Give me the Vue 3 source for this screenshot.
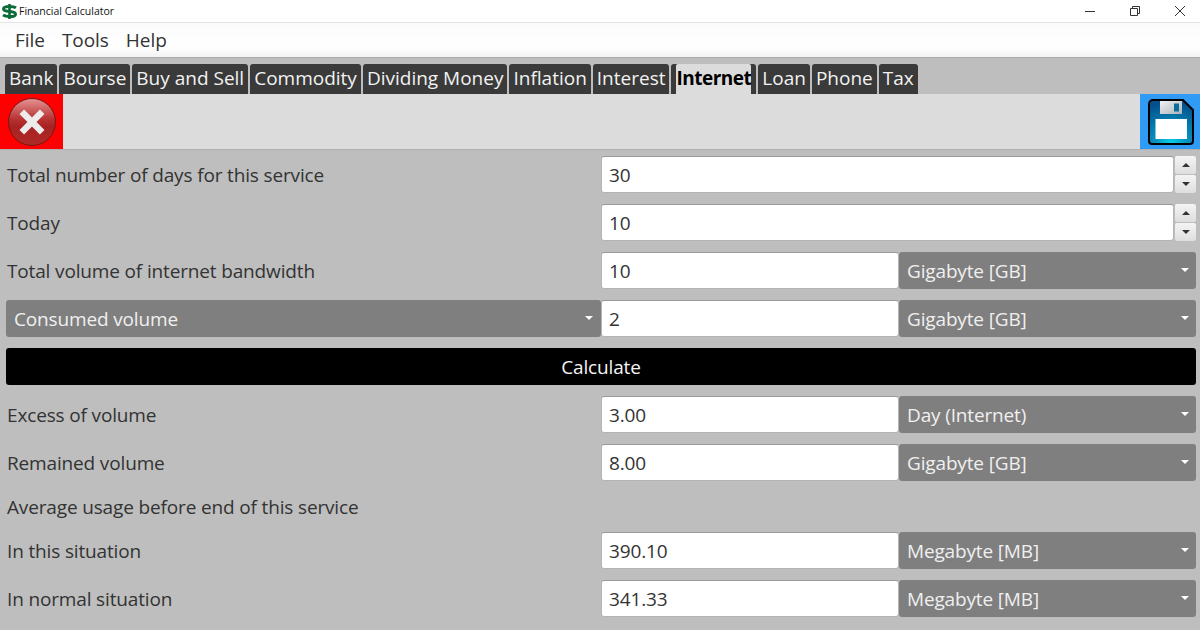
<script setup>
const menus = ['File', 'Tools', 'Help']
const tabs = ['Bank', 'Bourse', 'Buy and Sell', 'Commodity', 'Dividing Money', 'Inflation', 'Interest', 'Internet', 'Loan', 'Phone', 'Tax']
</script>

<template>
  <div class="window">
    <header class="titlebar">
      <svg class="app-icon" width="15" height="15" viewBox="0 0 15 15">
        <path d="M7.500 0v15" stroke="#0b6b3a" stroke-width="2.600" fill="none"/>
        <path d="M14 3.800C12.500 2.800 10 2.400 7.500 2.400S1.500 3 1.500 5s3 2.300 6 2.500 6 .8 6 2.700-3 2.400-6 2.400-5-.5-6.500-1.500" stroke="#0b6b3a" stroke-width="3" fill="none"/>
      </svg>
      <span class="app-title">Financial Calculator</span>
      <div class="win-controls">
        <svg width="12" height="12" viewBox="0 0 12 12"><path d="M1 6.500h10" stroke="#333" fill="none"/></svg>
        <svg width="12" height="12" viewBox="0 0 12 12"><path d="M1.500 3.500h7v7h-7zM3.500 3.500v-2h7v7h-2" stroke="#333" fill="none"/></svg>
        <svg width="12" height="12" viewBox="0 0 12 12"><path d="M1 1l10 10M11 1L1 11" stroke="#333" fill="none"/></svg>
      </div>
    </header>

    <nav class="menubar">
      <span v-for="m in menus" :key="m" class="menu">{{ m }}</span>
    </nav>

    <div class="tabstrip">
      <div v-for="t in tabs" :key="t" class="tab" :class="{ active: t === 'Internet' }"><span>{{ t }}</span></div>
    </div>

    <div class="toolbar">
      <button class="tool close-btn" aria-label="Close">
        <svg width="50" height="50" viewBox="0 0 50 50">
          <defs>
            <linearGradient id="redg" x1="0" y1="0" x2="0" y2="1">
              <stop offset="0" stop-color="#e79393"/>
              <stop offset="0.42" stop-color="#b93636"/>
              <stop offset="0.6" stop-color="#a82222"/>
              <stop offset="1" stop-color="#b02a2a"/>
            </linearGradient>
          </defs>
          <circle cx="25" cy="25" r="23.500" fill="url(#redg)" stroke="#741616" stroke-width="1"/>
          <path d="M14.800 14.800l20.400 20.400M35.200 14.800L14.800 35.200" stroke="#ececec" stroke-width="6.500" fill="none"/>
        </svg>
      </button>
      <button class="tool save-btn" aria-label="Save">
        <svg width="46" height="46" viewBox="0 0 46 46">
          <defs>
            <radialGradient id="blueg" cx="0.5" cy="1" r="0.95">
              <stop offset="0" stop-color="#05d4ec"/>
              <stop offset="0.35" stop-color="#0596c4"/>
              <stop offset="1" stop-color="#04508c"/>
            </radialGradient>
            <linearGradient id="shut" x1="0" y1="0" x2="1" y2="1">
              <stop offset="0" stop-color="#f2f2f2"/>
              <stop offset="1" stop-color="#a9b3ba"/>
            </linearGradient>
          </defs>
          <path d="M5 1h30l10 10v31a3 3 0 0 1-3 3H4a3 3 0 0 1-3-3V5a4 4 0 0 1 4-4z" fill="url(#blueg)" stroke="#000" stroke-width="2"/>
          <rect x="12" y="2" width="22" height="13" fill="url(#shut)"/>
          <rect x="26" y="4.500" width="5" height="8" fill="#066f9e"/>
          <rect x="7.500" y="20" width="31.500" height="20" fill="#fff"/>
        </svg>
      </button>
    </div>

    <main class="form">
      <label class="lbl">Total number of days for this service</label>
      <div class="spin wide">
        <div class="field">30</div>
        <div class="spin-btns"><span class="sb"><i class="up"></i></span><span class="sb"><i class="down"></i></span></div>
      </div>

      <label class="lbl">Today</label>
      <div class="spin wide">
        <div class="field">10</div>
        <div class="spin-btns"><span class="sb"><i class="up"></i></span><span class="sb"><i class="down"></i></span></div>
      </div>

      <label class="lbl">Total volume of internet bandwidth</label>
      <div class="field">10</div>
      <div class="select">Gigabyte [GB]<i class="caret"></i></div>

      <div class="select">Consumed volume<i class="caret small"></i></div>
      <div class="field">2</div>
      <div class="select">Gigabyte [GB]<i class="caret"></i></div>

      <button class="calc">Calculate</button>

      <label class="lbl">Excess of volume</label>
      <div class="field">3.00</div>
      <div class="select">Day (Internet)<i class="caret"></i></div>

      <label class="lbl">Remained volume</label>
      <div class="field">8.00</div>
      <div class="select">Gigabyte [GB]<i class="caret"></i></div>

      <label class="lbl heading">Average usage before end of this service</label>

      <label class="lbl">In this situation</label>
      <div class="field">390.10</div>
      <div class="select">Megabyte [MB]<i class="caret"></i></div>

      <label class="lbl">In normal situation</label>
      <div class="field">341.33</div>
      <div class="select">Megabyte [MB]<i class="caret"></i></div>
    </main>
  </div>
</template>

<style>
html, body { margin: 0; background: #bebebe; }
</style>

<style scoped>
.window {
  width: 1200px;
  height: 630px;
  overflow: hidden;
  background: #bebebe;
  font-family: "Open Sans", "Noto Sans", sans-serif;
  color: #333;
  display: flex;
  flex-direction: column;
}
.titlebar {
  height: 22px;
  flex: none;
  background: #fff;
  display: flex;
  align-items: center;
  padding-left: 2px;
  border-bottom: 1px solid #e4e4e4;
}
.app-icon { margin-right: 2px; }
.app-title { font-size: 10.500px; color: #111; }
.win-controls {
  margin-left: auto;
  display: flex;
  gap: 33px;
  padding-right: 14px;
}
.menubar {
  height: 34px;
  flex: none;
  display: flex;
  align-items: center;
  gap: 17px;
  padding: 0 0 0 15px;
  background: linear-gradient(#fbfbfb, #ffffff 70%, #f3f3f3);
  border-bottom: 1px solid #ababab;
  font-size: 19px;
  letter-spacing: -0.05px;
  color: #333;
}
.tabstrip {
  height: 36px;
  flex: none;
  display: flex;
  align-items: flex-end;
  gap: 2px;
  padding-left: 5px;
  background: #bebebe;
}
.tab {
  height: 30px;
  padding: 0 4px;
  background: #3a3a3a;
  border-radius: 3px 3px 0 0;
  display: flex;
  font-size: 19px;
  color: #f2f2f2;
}
.tab span { line-height: 29px; }
.tab.active { padding: 0 5px; color: #000; font-weight: 700; letter-spacing: -0.5px; }
.tab.active span { background: #dcdcdc; border-radius: 2px 2px 0 0; }
.toolbar {
  height: 56px;
  flex: none;
  display: flex;
  justify-content: space-between;
  background: #dcdcdc;
  border-bottom: 1px solid #b0b0b0;
  box-sizing: border-box;
}
.tool {
  border: 0;
  padding: 0;
  display: flex;
  align-items: center;
  justify-content: center;
}
.close-btn { width: 63px; background: #ff0000; }
.save-btn { width: 60px; background: #2f9bf5; padding-left: 2px; }
.form {
  display: grid;
  grid-template-columns: 595px 298px 297px;
  grid-template-rows: repeat(7, 37px) 29px repeat(2, 37px);
  row-gap: 11px;
  padding: 6px 4px 0 6px;
  font-size: 19px;
  letter-spacing: -0.15px;
}
.lbl {
  display: flex;
  align-items: center;
  padding-left: 1px;
  color: #333;
}
.heading {
  grid-column: 1 / -1;
}
.field {
  background: #fff;
  border: 1px solid #b4b4b4;
  border-top-color: #999;
  border-radius: 3px;
  box-sizing: border-box;
  padding-left: 7px;
  display: flex;
  align-items: center;
  color: #333;
}
.wide { grid-column: 2 / 4; }
.spin { display: flex; gap: 1px; }
.spin .field { flex: 1; }
.spin-btns {
  width: 21px;
  display: flex;
  flex-direction: column;
  gap: 1px;
}
.sb {
  flex: 1;
  background: linear-gradient(#f4f4f4, #dedede);
  border-radius: 2px;
  display: flex;
  align-items: center;
  justify-content: center;
}
.up, .down { width: 0; height: 0; border-left: 4px solid transparent; border-right: 4px solid transparent; }
.up { border-bottom: 4px solid #333; }
.down { border-top: 4px solid #333; }
.select {
  background: #7f7f7f;
  border-radius: 3px;
  color: #f0f0f0;
  display: flex;
  align-items: center;
  padding-left: 8px;
  position: relative;
}
.caret {
  position: absolute;
  right: 7px;
  top: 16px;
  border-left: 4px solid transparent;
  border-right: 4px solid transparent;
  border-top: 4px solid #fff;
}
.caret.small { right: 8px; }
.calc {
  grid-column: 1 / -1;
  background: #000;
  color: #f4f4f4;
  border: 0;
  border-radius: 3px;
  font: inherit;
  letter-spacing: inherit;
  padding: 0;
}
</style>
